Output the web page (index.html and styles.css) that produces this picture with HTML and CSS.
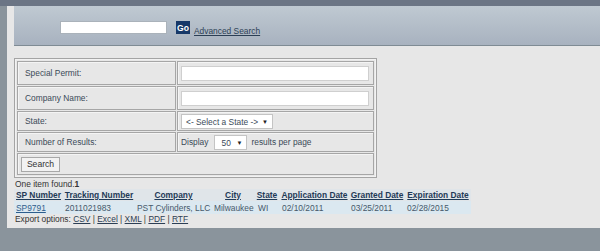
FILE: index.html
```html
<!DOCTYPE html>
<html lang="en">

<head>
    <meta charset="UTF-8">
    <meta name="viewport" content="width=device-width, initial-scale=1.0">
    <title>Special Permits</title>
    <link rel="stylesheet" href="styles.css">
</head>

<body>
    <div class="topbar"></div>
    <div class="main">
        <div class="header">
            <input type="text" class="quick">
            <button class="go">Go</button>
            <a href="#" class="adv">Advanced Search</a>
        </div>

        <div class="content">
            <table class="form">
                <tr class="r1">
                    <td class="label">Special Permit:</td>
                    <td class="field"><input type="text" class="text"></td>
                </tr>
                <tr class="r1">
                    <td class="label">Company Name:</td>
                    <td class="field"><input type="text" class="text"></td>
                </tr>
                <tr class="r2">
                    <td class="label">State:</td>
                    <td class="field">
                        <span class="select state">&lt;- Select a State -&gt;<span class="arrow">&#9660;</span></span>
                    </td>
                </tr>
                <tr class="r2">
                    <td class="label">Number of Results:</td>
                    <td class="field">
                        Display<span class="select num">50<span class="arrow">&#9660;</span></span>results per page
                    </td>
                </tr>
                <tr class="r3">
                    <td colspan="2"><button class="search">Search</button></td>
                </tr>
            </table>

            <div class="found">One item found.<b>1</b></div>

            <table class="results">
                <colgroup>
                    <col style="width:49px">
                    <col style="width:72px">
                    <col style="width:77px">
                    <col style="width:42px">
                    <col style="width:26px">
                    <col style="width:69px">
                    <col style="width:56px">
                    <col style="width:66px">
                </colgroup>
                <tr class="head">
                    <th><a href="#">SP Number</a></th>
                    <th><a href="#">Tracking Number</a></th>
                    <th><a href="#">Company</a></th>
                    <th><a href="#">City</a></th>
                    <th><a href="#">State</a></th>
                    <th><a href="#">Application Date</a></th>
                    <th><a href="#">Granted Date</a></th>
                    <th><a href="#">Expiration Date</a></th>
                </tr>
                <tr class="row">
                    <td><a href="#" class="sp">SP9791</a></td>
                    <td>2011021983</td>
                    <td>PST Cylinders, LLC</td>
                    <td>Milwaukee</td>
                    <td class="st">WI</td>
                    <td>02/10/2011</td>
                    <td>03/25/2011</td>
                    <td>02/28/2015</td>
                </tr>
            </table>

            <div class="export">Export options: <a href="#">CSV</a> | <a href="#">Excel</a> | <a href="#">XML</a> | <a href="#">PDF</a> | <a href="#">RTF</a></div>
        </div>
    </div>
</body>

</html>
```

FILE: styles.css
```css
body {
    margin: 0;
    background-color: #8a949c;
    font-family: "Liberation Sans", Arial, sans-serif;
    font-size: 8.4px;
    color: #3b4a58;
}

.topbar {
    height: 6px;
    background-color: #6b7585;
}

.main {
    margin-left: 7px;
    background-color: #e7e7e7;
    padding-bottom: 3px;
}

/* header */
.header {
    margin-left: 7px;
    height: 40px;
    box-sizing: border-box;
    padding: 15px 0 0 46px;
    display: flex;
    align-items: flex-start;
    background: linear-gradient(#bfc9d2, #a8b2bf);
    border-bottom: 1px solid #7f8b94;
}

.quick {
    width: 107px;
    height: 13px;
    box-sizing: border-box;
    border: 1px solid #aab2ba;
    background-color: #fff;
    padding: 0;
}

.go {
    margin-left: 9px;
    width: 14px;
    height: 13px;
    padding: 0;
    border: none;
    background-color: #173868;
    color: #fff;
    font-family: "Liberation Sans", Arial, sans-serif;
    font-weight: bold;
    font-size: 8.6px;
}

.adv {
    margin: 5px 0 0 4px;
    color: #2c3f55;
    font-size: 8.4px;
}

/* search form */
.content {
    padding-left: 7px;
}

.form {
    margin-top: 12px;
    width: 363px;
    border-collapse: separate;
    border-spacing: 1px;
    border: 1px solid #a4a4a4;
    box-shadow: inset 0 0 0 1px #f2f2f2;
    padding: 1px;
}

.form td {
    border: 1px solid #a6a6a6;
    box-shadow: inset 1px 1px 0 #f4f4f4;
    padding: 0 0 0 7px;
}

.form td.field {
    padding-left: 3px;
    width: 192px;
}

.form .r1 td {
    height: 22px;
}

.form .r2 td {
    height: 18px;
}

.form .r3 td {
    height: 20px;
    padding-left: 3px;
}

.text {
    display: block;
    width: 188px;
    height: 15px;
    box-sizing: border-box;
    border: 1px solid #cfcfcf;
    background-color: #fff;
    padding: 0;
}

.select {
    display: inline-block;
    position: relative;
    height: 15px;
    line-height: 14px;
    box-sizing: border-box;
    border: 1px solid #c4c4c4;
    background-color: #fff;
    padding-left: 4px;
    vertical-align: middle;
    color: #3b4a58;
}

.select .arrow {
    position: absolute;
    right: 4px;
    top: 0;
    font-size: 6px;
    color: #222;
}

.state {
    width: 92px;
}

.num {
    width: 33px;
    margin: 0 4px 0 6px;
    padding-left: 6px;
}

.search {
    width: 39px;
    height: 15px;
    padding: 0;
    border: 1px solid #a8a8a8;
    background-color: #f2f2f2;
    color: #333;
    font-family: "Liberation Sans", Arial, sans-serif;
    font-size: 8.6px;
}

.found {
    margin-top: 1px;
    padding-left: 1px;
    line-height: 10px;
    color: #333;
}

/* results */
.results {
    table-layout: fixed;
    width: 457px;
    border-collapse: collapse;
}

.results th {
    padding: 0;
    height: 12px;
    line-height: 11px;
    white-space: nowrap;
}

.results th a {
    color: #1f3a57;
    font-weight: bold;
}

.results .head {
    background-color: #e0e5e9;
}

.results .row {
    background-color: #dbe8f0;
}

.results td {
    padding: 0 0 0 2px;
    height: 13px;
    white-space: nowrap;
    color: #46586a;
}

.results td.st {
    padding-left: 4px;
}

.sp {
    color: #2d5d8c;
}

.export {
    padding-left: 1px;
    line-height: 11px;
    color: #333;
}

.export a {
    color: #2c3f55;
}
```
